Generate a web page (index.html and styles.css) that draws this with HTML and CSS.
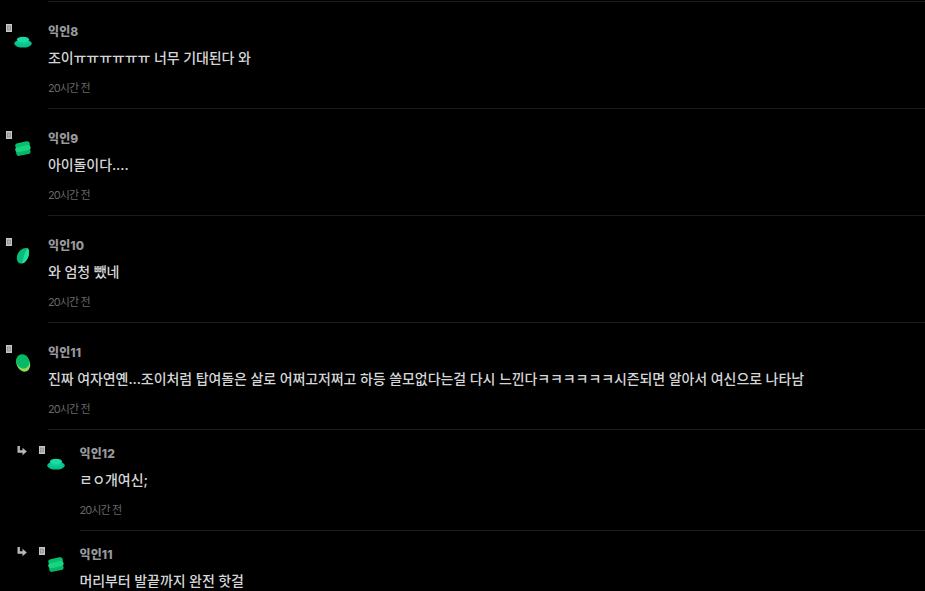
FILE: index.html
```
<!DOCTYPE html>
<html lang="ko">
<head>
    <meta charset="UTF-8">
    <meta name="viewport" content="width=device-width, initial-scale=1.0">
    <title>댓글</title>
    <link rel="stylesheet" href="styles.css">
</head>
<body>
    <!-- shared icons -->
    <svg class="symbols" width="0" height="0">
        <symbol id="badge" viewBox="0 0 6 8">
            <rect width="6" height="8" fill="#c6c6c6"/>
            <rect x="1.5" y="2" width="3" height="4" fill="#b0b0b0" stroke="#858585" stroke-width=".7"/>
        </symbol>
        <symbol id="stone-hat" viewBox="0 0 18 18">
            <ellipse cx="9" cy="10.6" rx="8.8" ry="4" fill="#0bbd86"/>
            <ellipse cx="9" cy="9.6" rx="7.6" ry="2.8" fill="#08cc91"/>
            <ellipse cx="9" cy="6.6" rx="6.1" ry="2.9" fill="#18dca4"/>
        </symbol>
        <symbol id="stone-stack" viewBox="0 0 18 18">
            <g transform="rotate(-12 9 9)">
                <rect x="1.4" y="9.4" width="14.6" height="5.6" rx="2.8" fill="#08b568"/>
                <rect x="2" y="2.2" width="14.8" height="5.6" rx="2.8" fill="#09be70"/>
                <rect x="1.2" y="6" width="15.6" height="5.2" rx="2.6" fill="#15d67f"/>
            </g>
        </symbol>
        <symbol id="stone-leaf" viewBox="0 0 18 18">
            <path d="M13.8 1.2C16 3.7 15.2 10 12.3 13.4C10 16.5 6.2 17.5 4 15.2C1.8 11.7 2.8 6.4 6.2 3.4C8.5 1.3 11.7.5 13.8 1.2Z" fill="#08bd7b"/>
            <path d="M13.8 1.2C16 3.7 15.2 10 12.3 13.4C11 15.2 9.4 16.3 7.7 16.6C9.6 12.6 10 5.5 13.8 1.2Z" fill="#23df9b"/>
        </symbol>
        <symbol id="stone-egg" viewBox="0 0 18 18">
            <ellipse cx="9.2" cy="9.4" rx="6.6" ry="8.6" transform="rotate(-24 9.2 9.4)" fill="#91df50"/>
            <ellipse cx="8.8" cy="7.4" rx="6.4" ry="7.4" transform="rotate(-30 8.8 7.4)" fill="#06b967"/>
        </symbol>
        <symbol id="arrow" viewBox="0 0 10 10">
            <path d="M1.7 0V5.5H6" fill="none" stroke="#b8b8b8" stroke-width="2.4"/>
            <path d="M5.5 1.8L9.8 5.5L5.5 9.2Z" fill="#b8b8b8"/>
        </symbol>
    </svg>

    <main class="comments">
        <article class="comment first">
            <div class="avatar">
                <svg class="badge"><use href="#badge"/></svg>
                <svg class="stone"><use href="#stone-hat"/></svg>
            </div>
            <div class="content">
                <h3 class="name">익인8</h3>
                <p class="text">조이ㅠㅠㅠㅠㅠㅠ 너무 기대된다 와</p>
                <time class="time">20시간 전</time>
            </div>
        </article>

        <article class="comment">
            <div class="avatar">
                <svg class="badge"><use href="#badge"/></svg>
                <svg class="stone"><use href="#stone-stack"/></svg>
            </div>
            <div class="content">
                <h3 class="name">익인9</h3>
                <p class="text">아이돌이다....</p>
                <time class="time">20시간 전</time>
            </div>
        </article>

        <article class="comment">
            <div class="avatar">
                <svg class="badge"><use href="#badge"/></svg>
                <svg class="stone"><use href="#stone-leaf"/></svg>
            </div>
            <div class="content">
                <h3 class="name">익인10</h3>
                <p class="text">와 엄청 뺐네</p>
                <time class="time">20시간 전</time>
            </div>
        </article>

        <article class="comment">
            <div class="avatar">
                <svg class="badge"><use href="#badge"/></svg>
                <svg class="stone"><use href="#stone-egg"/></svg>
            </div>
            <div class="content">
                <h3 class="name">익인11</h3>
                <p class="text">진짜 여자연옌...조이처럼 탑여돌은 살로 어쩌고저쩌고 하등 쓸모없다는걸 다시 느낀다ㅋㅋㅋㅋㅋㅋ시즌되면 알아서 여신으로 나타남</p>
                <time class="time">20시간 전</time>
            </div>
        </article>

        <article class="comment reply">
            <svg class="arrow"><use href="#arrow"/></svg>
            <div class="avatar">
                <svg class="badge"><use href="#badge"/></svg>
                <svg class="stone"><use href="#stone-hat"/></svg>
            </div>
            <div class="content">
                <h3 class="name">익인12</h3>
                <p class="text">ㄹㅇ개여신;</p>
                <time class="time">20시간 전</time>
            </div>
        </article>

        <article class="comment reply last">
            <svg class="arrow"><use href="#arrow"/></svg>
            <div class="avatar">
                <svg class="badge"><use href="#badge"/></svg>
                <svg class="stone"><use href="#stone-stack"/></svg>
            </div>
            <div class="content">
                <h3 class="name">익인11</h3>
                <p class="text">머리부터 발끝까지 완전 핫걸</p>
            </div>
        </article>
    </main>
</body>
</html>
```
FILE: styles.css
```
* {
    box-sizing: border-box;
}
body {
    margin: 0;
    background: #000;
    color: #d6d6d8;
    font-family: Inter, "Noto Sans CJK KR", sans-serif;
}
.symbols {
    position: absolute;
}
.comments {
    padding-top: 1px;
}
.comment {
    display: flex;
    height: 107px;
}
.avatar {
    display: flex;
    flex: none;
    width: 42px;
    margin-left: 6px;
    padding-top: 22px;
}
.badge {
    width: 6px;
    height: 8px;
}
.stone {
    width: 18px;
    height: 18px;
    margin: 8.5px 0 0 2px;
}
.content {
    flex: 1;
    padding-top: 20px;
    border-bottom: 1px solid #1c1c1c;
}
.first {
    height: 108px;
}
.first .avatar {
    padding-top: 23px;
}
.first .content {
    border-top: 1px solid #1c1c1c;
}
.name {
    margin: 0;
    font-size: 12px;
    font-weight: 800;
    line-height: 20px;
    letter-spacing: 0.1px;
    color: #98989c;
}
.text {
    margin: 4px 0 0;
    font-size: 14px;
    font-weight: 500;
    line-height: 24px;
    letter-spacing: -0.09px;
    white-space: nowrap;
}
.time {
    display: block;
    margin-top: 8px;
    font-size: 11px;
    line-height: 20px;
    letter-spacing: -0.9px;
    color: #67676a;
}
.reply {
    height: 101px;
}
.reply .arrow {
    flex: none;
    width: 10px;
    height: 10px;
    margin: 16px 0 0 17px;
}
.reply .avatar {
    width: 40.5px;
    margin-left: 12px;
    padding-top: 16px;
}
.reply .content {
    padding-top: 14px;
}
.last {
    height: 60px;
}
.last .text {
    margin-top: 5px;
    line-height: 21px;
}
.last .content {
    border-bottom: none;
}
```
